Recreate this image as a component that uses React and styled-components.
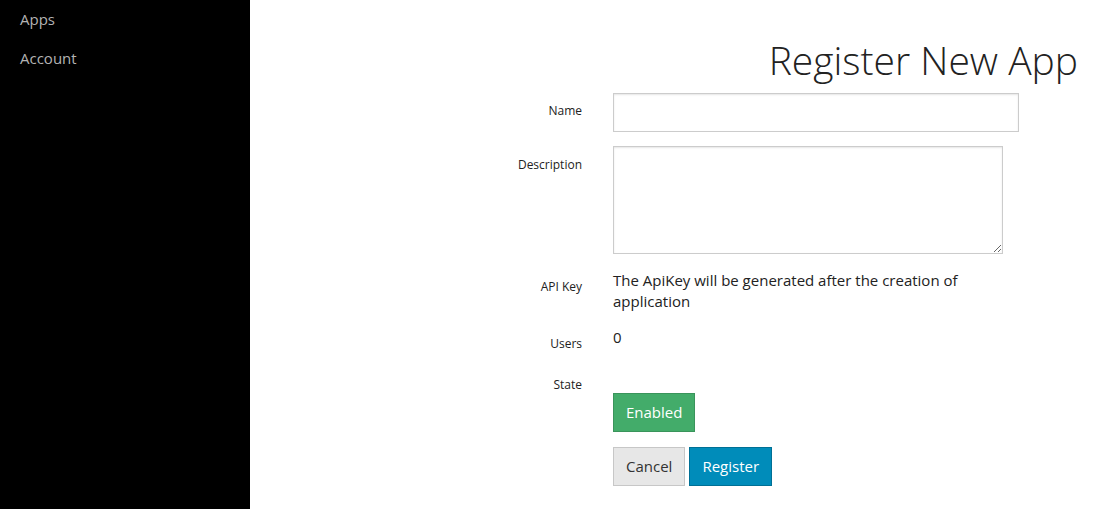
import React from 'react';
import styled, { createGlobalStyle } from 'styled-components';

const GlobalStyle = createGlobalStyle`
  html, body {
    margin: 0;
    padding: 0;
    background: #fff;
    font-family: "Open Sans", "Liberation Sans", sans-serif;
    color: #222;
  }
`;

const Layout = styled.div`
  display: flex;
  min-height: 509px;
`;

const Sidebar = styled.nav`
  width: 250px;
  flex-shrink: 0;
  background: #000;
  display: flex;
  flex-direction: column;
`;

const NavLink = styled.a`
  display: block;
  padding: 9px 20px;
  font-size: 15px;
  line-height: 21px;
  color: #b3b3b3;
  text-decoration: none;
  cursor: pointer;
`;

const Main = styled.main`
  flex: 1;
  padding: 0 42px 0 0;
  display: flex;
  flex-direction: column;
`;

const Title = styled.h1`
  margin: 33px 0 7px;
  text-align: right;
  font-size: 39px;
  line-height: 53px;
  font-weight: 300;
  color: #222;
`;

const Row = styled.div`
  display: grid;
  grid-template-columns: 332px 406px;
  column-gap: 31px;
  margin-top: ${p => p.$gap || 0}px;
`;

const Label = styled.label`
  text-align: right;
  font-size: 12px;
  line-height: 17px;
  color: #222;
  padding-top: ${p => p.$offset || 0}px;
`;

const Input = styled.input`
  box-sizing: border-box;
  width: 406px;
  height: 39px;
  border: 1px solid #ccc;
  box-shadow: inset 0 1px 2px rgba(0, 0, 0, 0.1);
  font: inherit;
  font-size: 14px;
  padding: 8px;
  outline: none;
`;

const TextArea = styled.textarea`
  box-sizing: border-box;
  width: 390px;
  height: 108px;
  border: 1px solid #ccc;
  box-shadow: inset 0 1px 2px rgba(0, 0, 0, 0.1);
  font: inherit;
  font-size: 14px;
  padding: 8px;
  outline: none;
  display: block;
`;

const Value = styled.div`
  width: 390px;
  font-size: 15px;
  line-height: 21px;
  color: #222;
`;

const ButtonRow = styled.div`
  display: flex;
  gap: 4px;
`;

const Button = styled.button`
  box-sizing: border-box;
  height: 39px;
  padding: 0 12px;
  font-family: inherit;
  font-size: 15px;
  line-height: 21px;
  border: 1px solid ${p => p.$border};
  background: ${p => p.$bg};
  color: ${p => p.$color || '#fff'};
  cursor: pointer;
`;

export default function App() {
  return (
    <>
      <GlobalStyle />
      <Layout>
        <Sidebar>
          <NavLink>Apps</NavLink>
          <NavLink>Account</NavLink>
        </Sidebar>
        <Main>
          <Title>Register New App</Title>
          <Row>
            <Label $offset={9}>Name</Label>
            <Input type="text" />
          </Row>
          <Row $gap={14}>
            <Label $offset={10}>Description</Label>
            <TextArea />
          </Row>
          <Row $gap={16}>
            <Label $offset={8}>API Key</Label>
            <Value>The ApiKey will be generated after the creation of application</Value>
          </Row>
          <Row $gap={15}>
            <Label $offset={8}>Users</Label>
            <Value>0</Value>
          </Row>
          <Row $gap={24}>
            <Label>State</Label>
          </Row>
          <Row>
            <div />
            <div>
              <Button $bg="#43ac6a" $border="#3a945b">Enabled</Button>
            </div>
          </Row>
          <Row $gap={15}>
            <div />
            <ButtonRow>
              <Button $bg="#e7e7e7" $border="#c7c7c7" $color="#333">Cancel</Button>
              <Button $bg="#008cba" $border="#007095">Register</Button>
            </ButtonRow>
          </Row>
        </Main>
      </Layout>
    </>
  );
}
